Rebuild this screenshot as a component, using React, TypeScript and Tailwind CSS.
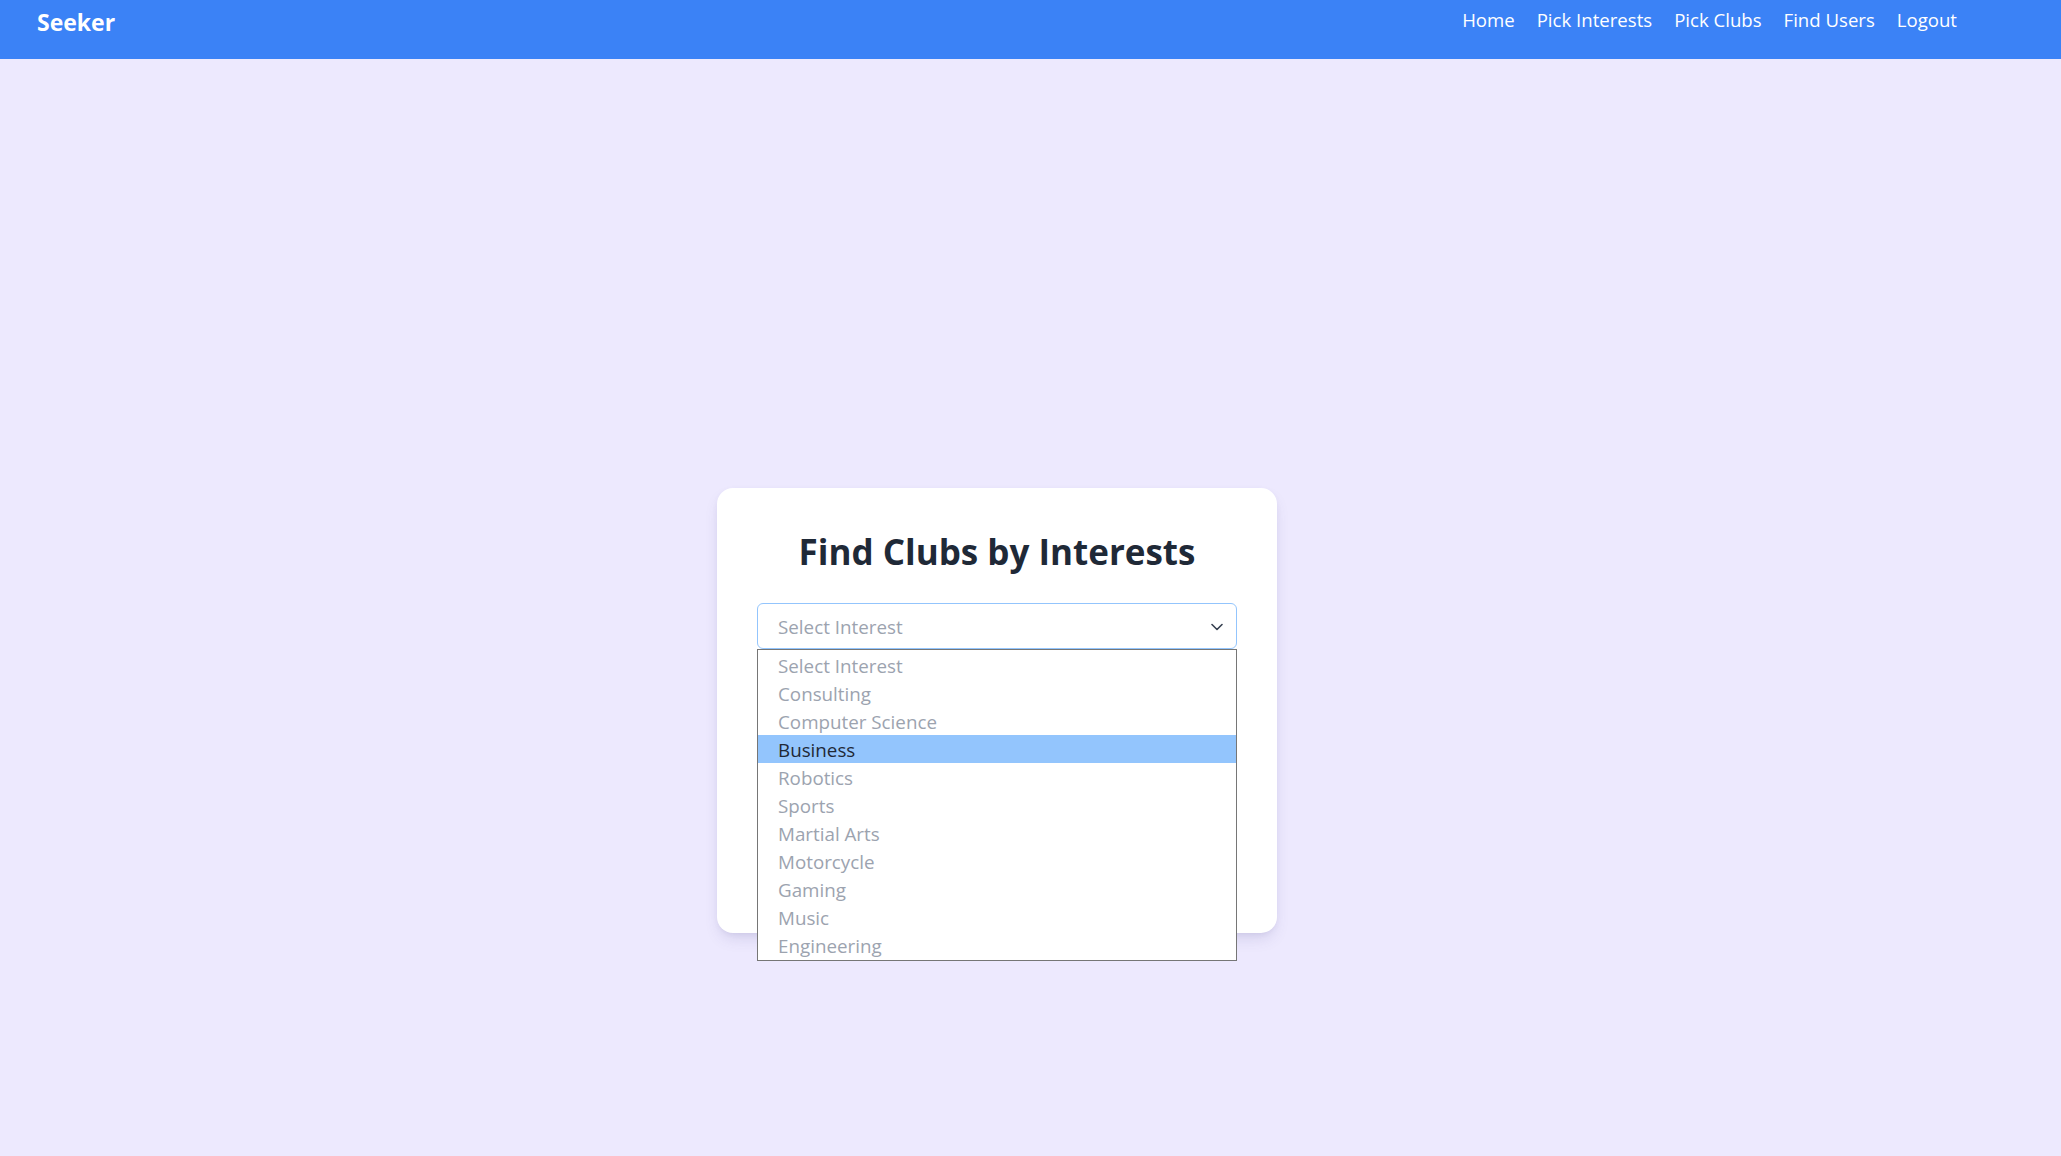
import React from "react";

const items = [
  "Select Interest",
  "Consulting",
  "Computer Science",
  "Business",
  "Robotics",
  "Sports",
  "Martial Arts",
  "Motorcycle",
  "Gaming",
  "Music",
  "Engineering",
];

export default function App() {
  return (
    <div
      className="min-h-[1156px] w-full bg-[#ede9fe]"
      style={{ fontFamily: '"Open Sans", "Noto Sans", sans-serif' }}
    >
      <nav className="flex h-[59px] items-start justify-between bg-[#3b82f6] pl-[37px] pr-[104px]">
        <div className="pt-[5px] text-[23px] font-bold leading-[34px] text-white">Seeker</div>
        <div className="flex items-start gap-[22px] pt-[5px] text-[18.6px] leading-[30px] text-white">
          <a>Home</a>
          <a>Pick Interests</a>
          <a>Pick Clubs</a>
          <a>Find Users</a>
          <a>Logout</a>
        </div>
      </nav>
      <main className="flex justify-center pr-[67px] pt-[429px]">
        <div className="w-[560px] rounded-[16px] bg-white px-[40px] pt-[40px] pb-[40px] shadow-[0_8px_16px_-4px_rgba(80,70,140,0.18),0_2px_6px_-2px_rgba(80,70,140,0.1)]">
          <h1 className="mb-[27px] text-center text-[35px] font-bold leading-[48px] text-[#1f2937]">
            Find Clubs by Interests
          </h1>
          <div className="relative">
            <div className="flex h-[46px] items-center justify-between rounded-[6px] border border-[#93c5fd] pl-[20px] pr-[13px] pt-[2px] text-[18.8px] text-[#9ca3af]">
              <span>Select Interest</span>
              <svg width="12" height="8" viewBox="0 0 12 8" fill="none">
                <path d="M1 1.5L6 6.5L11 1.5" stroke="#374151" strokeWidth="1.6" strokeLinecap="round" strokeLinejoin="round" />
              </svg>
            </div>
            <div className="absolute left-0 top-[46px] z-10 w-[480px] border border-[#767676] bg-white pt-[1px] pb-px">
              {items.map((it) => (
                <div
                  key={it}
                  className={
                    it === "Business"
                      ? "h-[28px] bg-[#93c5fd] pl-[20px] pt-[1px] text-[18.8px] leading-[28px] text-[#1f2937]"
                      : "h-[28px] pl-[20px] pt-[1px] text-[18.8px] leading-[28px] text-[#9ca3af]"
                  }
                >
                  {it}
                </div>
              ))}
            </div>
          </div>
          <div className="h-[244px]" />
        </div>
      </main>
    </div>
  );
}
